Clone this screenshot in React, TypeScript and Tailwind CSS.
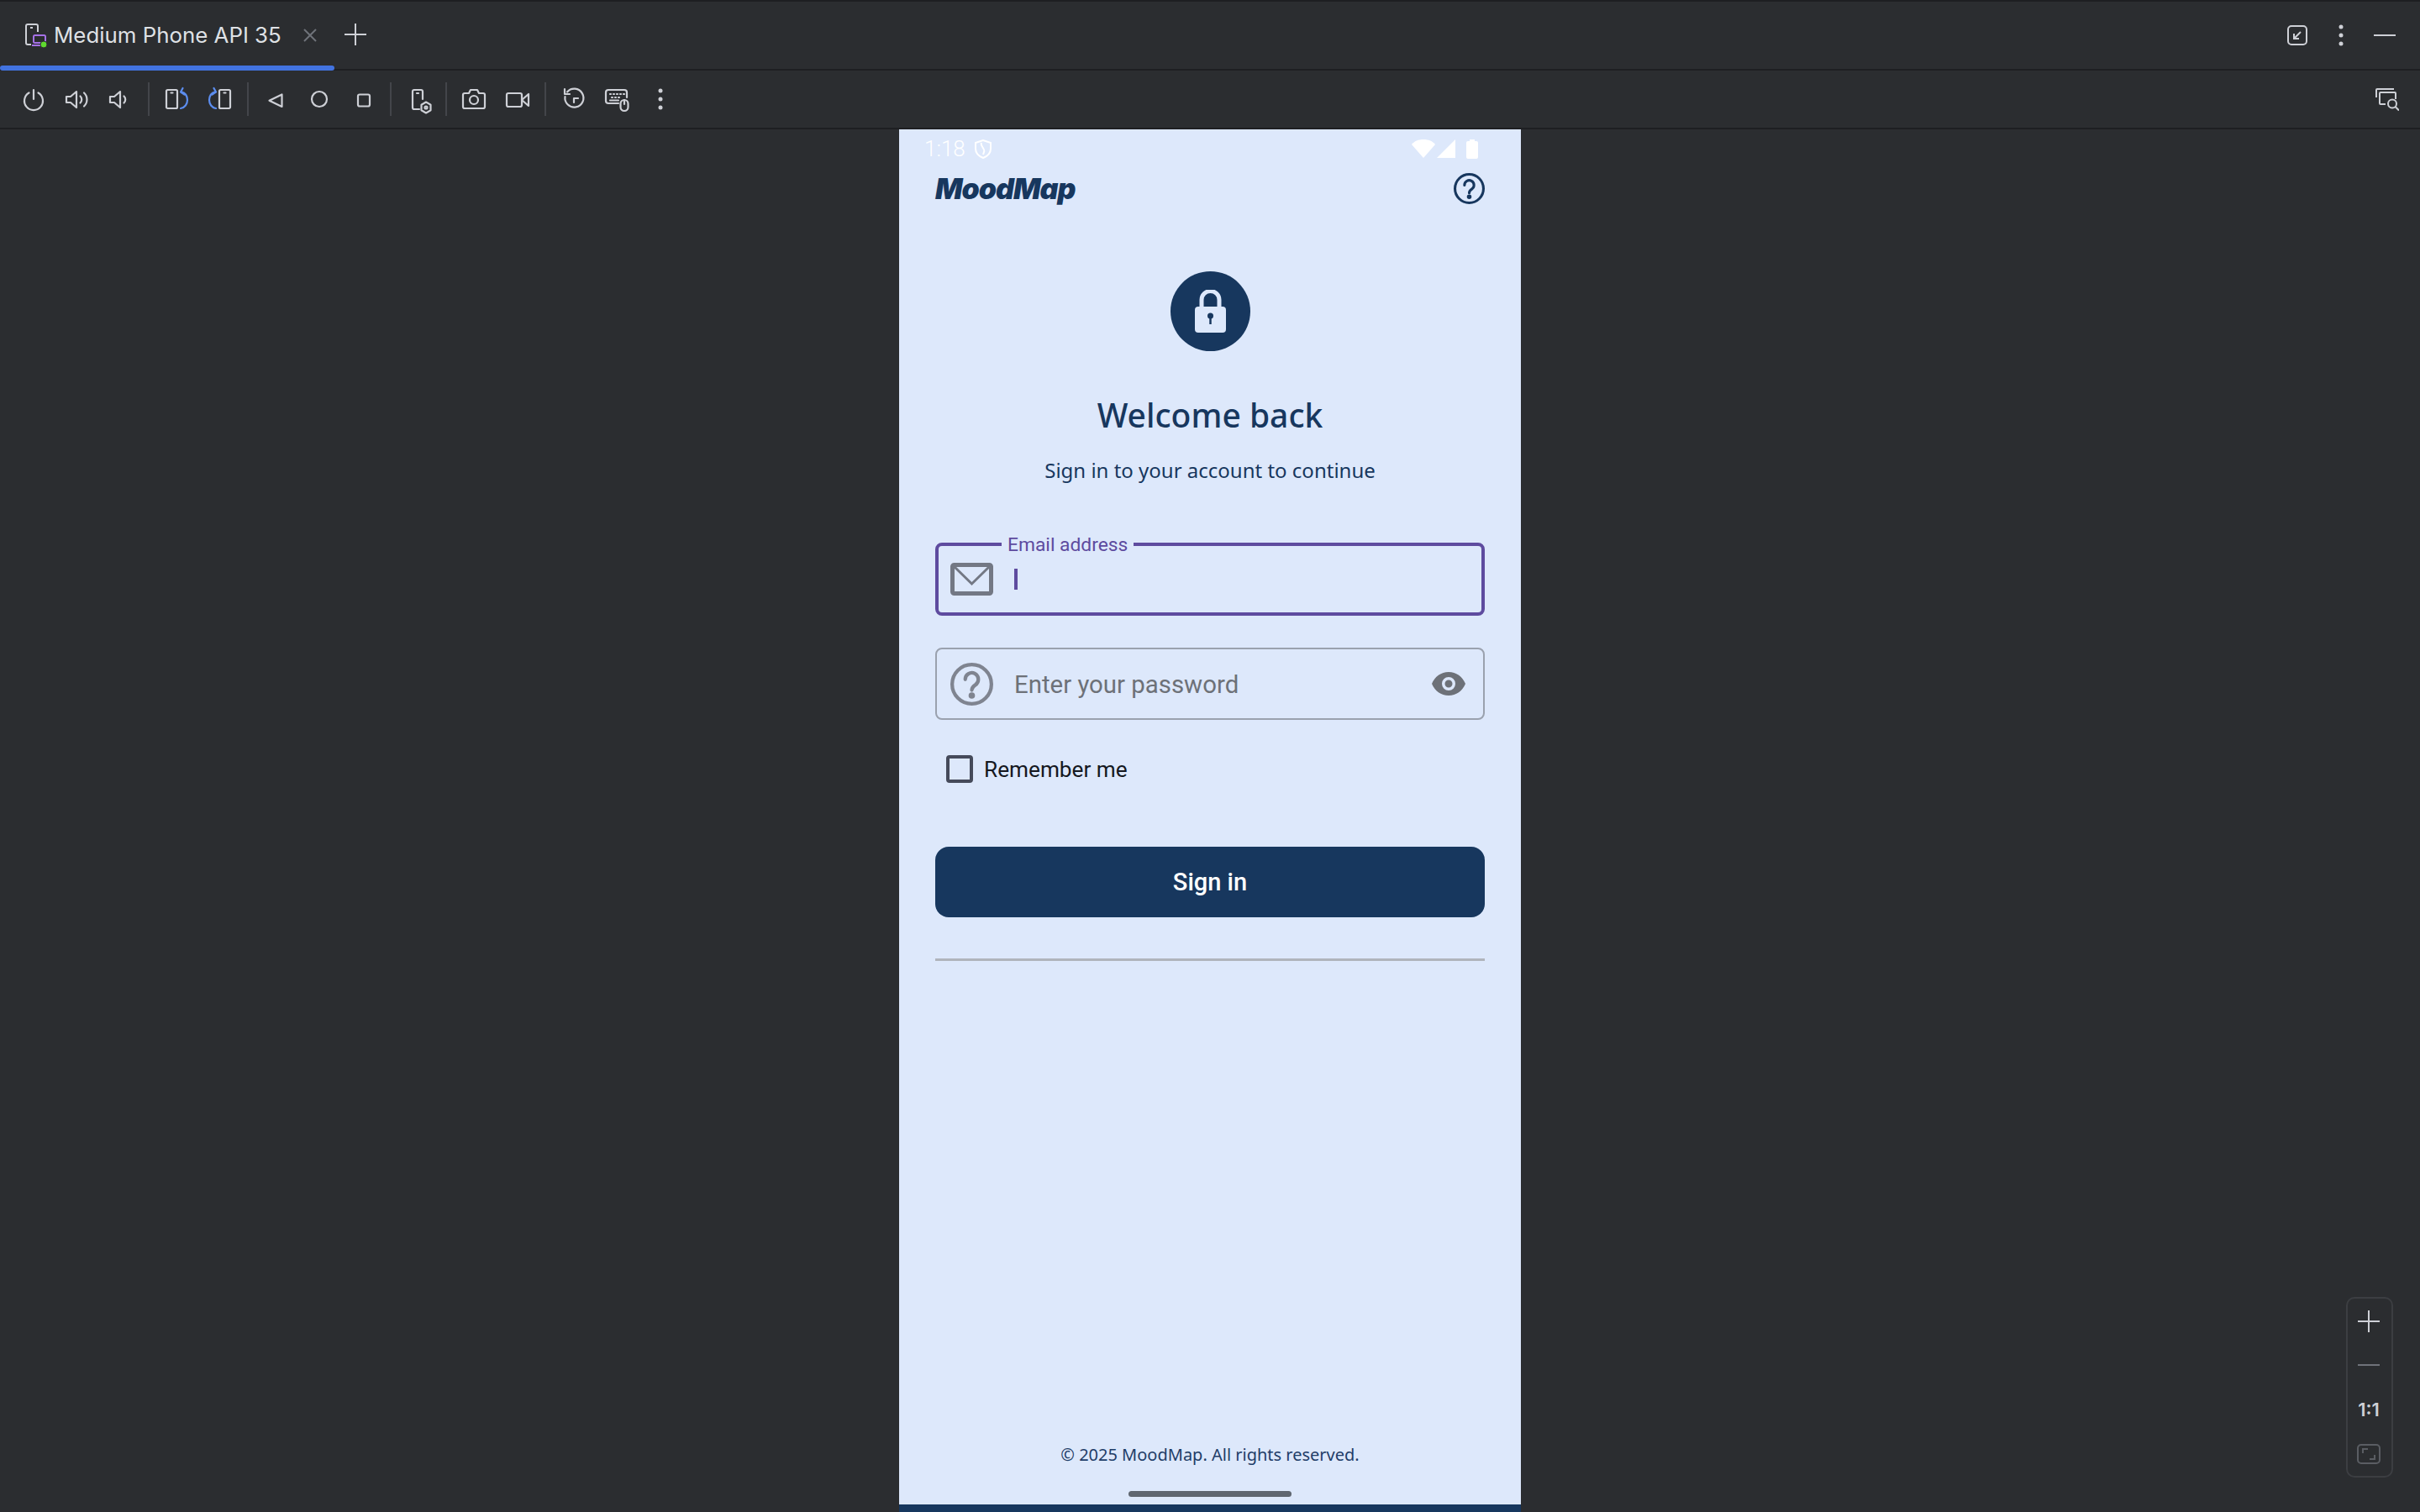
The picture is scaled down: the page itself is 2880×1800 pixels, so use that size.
import React from "react";

const toolbarStroke = {
  fill: "none",
  stroke: "currentColor",
  strokeWidth: 2.2,
  strokeLinecap: "round" as const,
  strokeLinejoin: "round" as const,
};

const Icon = ({ children }: { children: React.ReactNode }) => (
  <div className="flex h-[52px] w-[52px] items-center justify-center text-[#ced0d6]">
    <svg width="28" height="28" viewBox="0 0 28 28" className="overflow-visible" {...toolbarStroke}>
      {children}
    </svg>
  </div>
);

const Sep = () => <div className="mx-[6px] h-[40px] w-[2px] bg-[#43454a]" />;

const RotateIcon = ({ mirror = false }: { mirror?: boolean }) => (
  <g transform={mirror ? "matrix(-1 0 0 1 28 0)" : undefined}>
    <rect x="2" y="3" width="13" height="22" rx="1.5" />
    <path d="M7.500 6.500h2" />
    <g stroke="#5c8dee">
      <path d="M20.500 5.500c3.700.8 6.500 4.700 6.500 9.500s-3 9.200-8 10" />
      <path d="M21.500 1 19 5.500l4.500 3" />
    </g>
  </g>
);

const TabBar = () => (
  <div className="relative flex h-[84px] shrink-0 items-center border-t-2 border-b-2 border-[#1e1f22] bg-[#2b2d30] pl-[30px] pr-[29px]">
    <svg width="26" height="28" viewBox="0 0 26 28" className="overflow-visible">
      <path d="M7 25H3a2 2 0 0 1-2-2V3a2 2 0 0 1 2-2h10a2 2 0 0 1 2 2v7" fill="none" stroke="#ced0d6" strokeWidth="2" />
      <path d="M6 5h3" stroke="#ced0d6" strokeWidth="2" />
      <rect x="10" y="14" width="14" height="9" rx="1.5" fill="none" stroke="#a571e6" strokeWidth="2" />
      <path d="M8 26h16" stroke="#a571e6" strokeWidth="2" />
      <circle cx="22" cy="25" r="4" fill="#5fd92f" stroke="#2b2d30" strokeWidth="1" />
    </svg>
    <span className="ml-[8px] font-['Inter',sans-serif] text-[25.85px] leading-[32px] text-[#dfe1e5]">
      Medium Phone API 35
    </span>
    <svg width="16" height="16" viewBox="0 0 16 16" className="ml-[26px]" stroke="#6f737a" strokeWidth="2">
      <path d="M1 1l14 14M15 1 1 15" />
    </svg>
    <svg width="26" height="26" viewBox="0 0 26 26" className="ml-[33px] -translate-y-[1px]" stroke="#ced0d6" strokeWidth="2">
      <path d="M13 0v26M0 13h26" />
    </svg>
    <div className="flex-1" />
    <svg width="24" height="24" viewBox="0 0 24 24" fill="none" stroke="#ced0d6" strokeWidth="2">
      <rect x="1" y="1" width="22" height="22" rx="4" />
      <path d="M16 8 8 16M8 10v6h6" />
    </svg>
    <svg width="8" height="28" viewBox="0 0 8 28" className="ml-[36px]" fill="#ced0d6">
      <circle cx="4" cy="4" r="2.5" />
      <circle cx="4" cy="14" r="2.5" />
      <circle cx="4" cy="24" r="2.5" />
    </svg>
    <div className="ml-[35px] h-[2px] w-[26px] bg-[#ced0d6]" />
    <div className="absolute bottom-[-2px] left-0 h-[6px] w-[398px] rounded-full bg-[#4273e0]" />
  </div>
);

const Toolbar = () => (
  <div className="flex h-[70px] shrink-0 items-center border-b-2 border-[#1e1f22] bg-[#2b2d30] pl-[14px] pr-[25px]">
    <Icon>
      <path d="M8.500 6.500a11 11 0 1 0 11 0" />
      <path d="M14 3v11" />
    </Icon>
    <Icon>
      <path d="M1 11v7h5l7 6V5l-7 6z" />
      <path d="M17.500 10.500a5.500 5.500 0 0 1 0 8" />
      <path d="M22 6.500a11 11 0 0 1 0 16" />
    </Icon>
    <Icon>
      <path d="M1 11v7h5l7 6V5l-7 6z" />
      <path d="M17.500 10.500a5.500 5.500 0 0 1 0 8" />
    </Icon>
    <Sep />
    <Icon>
      <RotateIcon />
    </Icon>
    <Icon>
      <RotateIcon mirror />
    </Icon>
    <Sep />
    <Icon>
      <path d="M21.500 8.500v14.500L6.500 15.700z" />
    </Icon>
    <Icon>
      <circle cx="14" cy="14" r="9" />
    </Icon>
    <Icon>
      <rect x="8" y="8.500" width="14" height="14" rx="2" />
    </Icon>
    <Sep />
    <Icon>
      <path d="M15 26H9a2 2 0 0 1-2-2V5a2 2 0 0 1 2-2h8a2 2 0 0 1 2 2v9" />
      <path d="M12 7h2" />
      <path d="M23 17.500l5.500 3.200v6.600L23 30.500l-5.500-3.200v-6.600z" />
      <circle cx="23" cy="24" r="1.500" />
    </Icon>
    <Sep />
    <Icon>
      <path d="M3 7h5l2-4h8l2 4h5a2 2 0 0 1 2 2v14a2 2 0 0 1-2 2H3a2 2 0 0 1-2-2V9a2 2 0 0 1 2-2z" />
      <circle cx="14" cy="15" r="5" />
    </Icon>
    <Icon>
      <rect x="1" y="7" width="18" height="16" rx="2" />
      <path d="M19 15l8-7v14z" />
    </Icon>
    <Sep />
    <Icon>
      <path d="M7 5.500A11 11 0 1 1 4.500 11" />
      <path d="M4 2v6h6" />
      <path d="M15 18v-5h5" />
    </Icon>
    <Icon>
      <path d="M16 19H4a3 3 0 0 1-3-3V6a3 3 0 0 1 3-3h19a3 3 0 0 1 3 3v6" />
      <path d="M6 8h1M10 8h1M14 8h1M18 8h1M22 8h1M8 12h1M12 12h1M16 12h1M6 15.500h10" />
      <rect x="18.500" y="15" width="9" height="13" rx="4.500" />
      <path d="M23 15v5" />
    </Icon>
    <div className="flex h-[52px] w-[52px] items-center justify-center">
      <svg width="8" height="28" viewBox="0 0 8 28" fill="#ced0d6">
        <circle cx="4" cy="4" r="2.5" />
        <circle cx="4" cy="14" r="2.5" />
        <circle cx="4" cy="24" r="2.5" />
      </svg>
    </div>
    <div className="flex-1" />
    <svg width="28" height="28" viewBox="0 0 28 28" fill="none" stroke="#ced0d6" strokeWidth="2">
      <path d="M1 12V3a1 1 0 0 1 1-1h20" />
      <path d="M12 20H6a1 1 0 0 1-1-1V7a1 1 0 0 1 1-1h17a1 1 0 0 1 1 1v7" />
      <circle cx="20" cy="19.500" r="5" />
      <path d="M23.500 23 28 27.500" />
    </svg>
  </div>
);

const StatusBar = () => (
  <div className="flex h-[46px] shrink-0 items-center pl-[30px] pr-[51px] text-white">
    <span className="font-['Roboto',sans-serif] text-[26px] leading-[30px] font-light">1:18</span>
    <svg width="20" height="23" viewBox="0 0 20 23" className="ml-[11px]" fill="none" stroke="white" strokeWidth="2">
      <path d="M10 1 1 4v7c0 5 4 9 9 11 5-2 9-6 9-11V4z" />
      <path d="M8 4c-2 4 5 7 3 11l-1 3" />
    </svg>
    <div className="flex-1" />
    <svg width="28" height="22" viewBox="0 0 28 22" fill="white">
      <path d="M14 22 0 6c3-4 8-6 14-6s11 2 14 6z" />
    </svg>
    <svg width="22" height="22" viewBox="0 0 22 22" className="ml-[2px]" fill="white">
      <path d="M22 0v22H0z" />
    </svg>
    <svg width="14" height="23" viewBox="0 0 14 23" className="ml-[13px]" fill="white">
      <path d="M4 2V0h6v2h2a2 2 0 0 1 2 2v17a2 2 0 0 1-2 2H2a2 2 0 0 1-2-2V4a2 2 0 0 1 2-2z" />
    </svg>
  </div>
);

const HelpGlyph = ({ size, color, width }: { size: number; color: string; width: number }) => (
  <svg width={size} height={size} viewBox="0 0 36 36" fill="none" stroke={color} strokeWidth={width}>
    <circle cx="18" cy="18" r={18 - width / 2} />
    <path d="M12.500 14a5.500 5.500 0 1 1 8.500 4.600c-2 1.300-3 2.400-3 4.400" strokeLinecap="round" />
    <circle cx="18" cy="27.500" r="1.200" fill={color} />
  </svg>
);

const SignInForm = () => (
  <div className="flex flex-col px-[43px]">
    <div className="relative flex h-[87px] items-center rounded-[8px] border-[4px] border-[#5e4b9f] pl-[14px]">
      <span className="absolute -top-[14px] left-[75px] bg-[#dde8fb] px-[7px] font-['Roboto',sans-serif] text-[22.8px] leading-[26px] text-[#5e4b9f]">
        Email address
      </span>
      <svg width="51" height="39" viewBox="0 0 51 39" fill="none" stroke="#737884" strokeWidth="5">
        <rect x="2.500" y="2.500" width="46" height="34" rx="2" />
        <path d="M3 3 25.500 25 48 3" strokeWidth="3" />
      </svg>
      <div className="ml-[25px] h-[25px] w-[4px] bg-[#5e4b9f]" />
    </div>

    <div className="mt-[38px] flex h-[86px] items-center rounded-[8px] border-2 border-[#9aa1ae] pl-[16px] pr-[21px]">
      <HelpGlyph size={51} color="#7f8490" width={3} />
      <span className="ml-[25px] flex-1 translate-y-[1px] font-['Roboto',sans-serif] text-[29.4px] leading-[36px] text-[#6d7178]">
        Enter your password
      </span>
      <svg width="40" height="28" viewBox="0 0 40 28">
        <path
          fillRule="evenodd"
          fill="#6d7178"
          d="M20 0c9 0 16.500 5.500 20 14-3.500 8.500-11 14-20 14S3.500 22.500 0 14C3.500 5.500 11 0 20 0zm0 6a8 8 0 1 0 0 16 8 8 0 0 0 0-16zm0 3.500a4.500 4.500 0 1 1 0 9 4.500 4.500 0 0 1 0-9z"
        />
      </svg>
    </div>

    <div className="mt-[42px] flex h-[33px] items-center pl-[13px]">
      <div className="h-[33px] w-[32px] rounded-[4px] border-[4px] border-[#454a5a]" />
      <span className="ml-[13px] translate-y-[1px] font-['Roboto',sans-serif] text-[26.2px] leading-[33px] text-[#15181f]">Remember me</span>
    </div>

    <button className="mt-[76px] flex h-[84px] items-center justify-center rounded-[16px] bg-[#17375e] pt-[2px] font-['Roboto',sans-serif] text-[29px] font-medium text-white">
      Sign in
    </button>

    <div className="mt-[49px] h-[3px] bg-[#b0b4bc]" />
  </div>
);

const Phone = () => (
  <div className="flex w-[740px] flex-col bg-[#dde8fb]">
    <StatusBar />
    <div className="flex h-[48px] shrink-0 items-center justify-between px-[43px]">
      <span className="translate-y-[1px] font-['Inter',sans-serif] text-[34px] leading-[48px] font-black tracking-[-1px] text-[#17375e] italic">
        MoodMap
      </span>
      <HelpGlyph size={37} color="#17375e" width={3} />
    </div>

    <div className="mt-[75px] flex h-[95px] w-[95px] items-center justify-center self-center rounded-full bg-[#17375e]">
      <svg width="37" height="51" viewBox="0 0 37 51">
        <path d="M8 22V12a10.500 10.500 0 0 1 21 0v10" fill="none" stroke="#dde8fb" strokeWidth="5" />
        <rect x="0" y="20" width="37" height="31" rx="4" fill="#dde8fb" />
        <circle cx="18.500" cy="31" r="3.500" fill="#17375e" />
        <path d="M18.500 32v9" stroke="#17375e" strokeWidth="2.500" />
      </svg>
    </div>

    <h1 className="mt-[50px] text-center font-['Noto_Sans',sans-serif] text-[39px] leading-[52px] font-medium text-[#17375e]">
      Welcome back
    </h1>
    <p className="mt-[22px] mb-[68px] text-center font-['Noto_Sans',sans-serif] text-[24px] leading-[36px] text-[#17375e]">
      Sign in to your account to continue
    </p>

    <SignInForm />

    <p className="mt-auto text-center font-['Noto_Sans',sans-serif] text-[20px] leading-[30px] text-[#1f3d68]">
      © 2025 MoodMap. All rights reserved.
    </p>
    <div className="mt-[28px] h-[7px] w-[194px] self-center rounded-full bg-[#5f6670]" />
    <div className="mt-[9px] h-[9px] bg-[#17375e]" />
  </div>
);

const ZoomControls = () => (
  <div className="absolute right-[32px] bottom-[41px] flex h-[215px] w-[56px] flex-col items-center rounded-[10px] border-2 border-[#3c3e42] pt-[14px] pr-[2px]">
    <svg width="26" height="26" viewBox="0 0 26 26" stroke="#ced0d6" strokeWidth="2">
      <path d="M13 0v26M0 13h26" />
    </svg>
    <div className="mt-[38px] h-[2px] w-[26px] bg-[#6f737a]" />
    <span className="mt-[39px] font-['Inter',sans-serif] text-[22px] leading-[26px] font-semibold text-[#ced0d6]">1:1</span>
    <svg width="28" height="24" viewBox="0 0 28 24" className="mt-[28px]" fill="none" stroke="#5a5d63" strokeWidth="2">
      <rect x="1" y="1" width="26" height="22" rx="4" />
      <path d="M7 11V6h6M21 13v5h-6" />
    </svg>
  </div>
);

export default function App() {
  return (
    <div className="flex h-[1800px] w-[2880px] flex-col overflow-hidden bg-[#2b2d30]">
      <TabBar />
      <Toolbar />
      <div className="relative flex flex-1 justify-center">
        <Phone />
        <ZoomControls />
      </div>
    </div>
  );
}
